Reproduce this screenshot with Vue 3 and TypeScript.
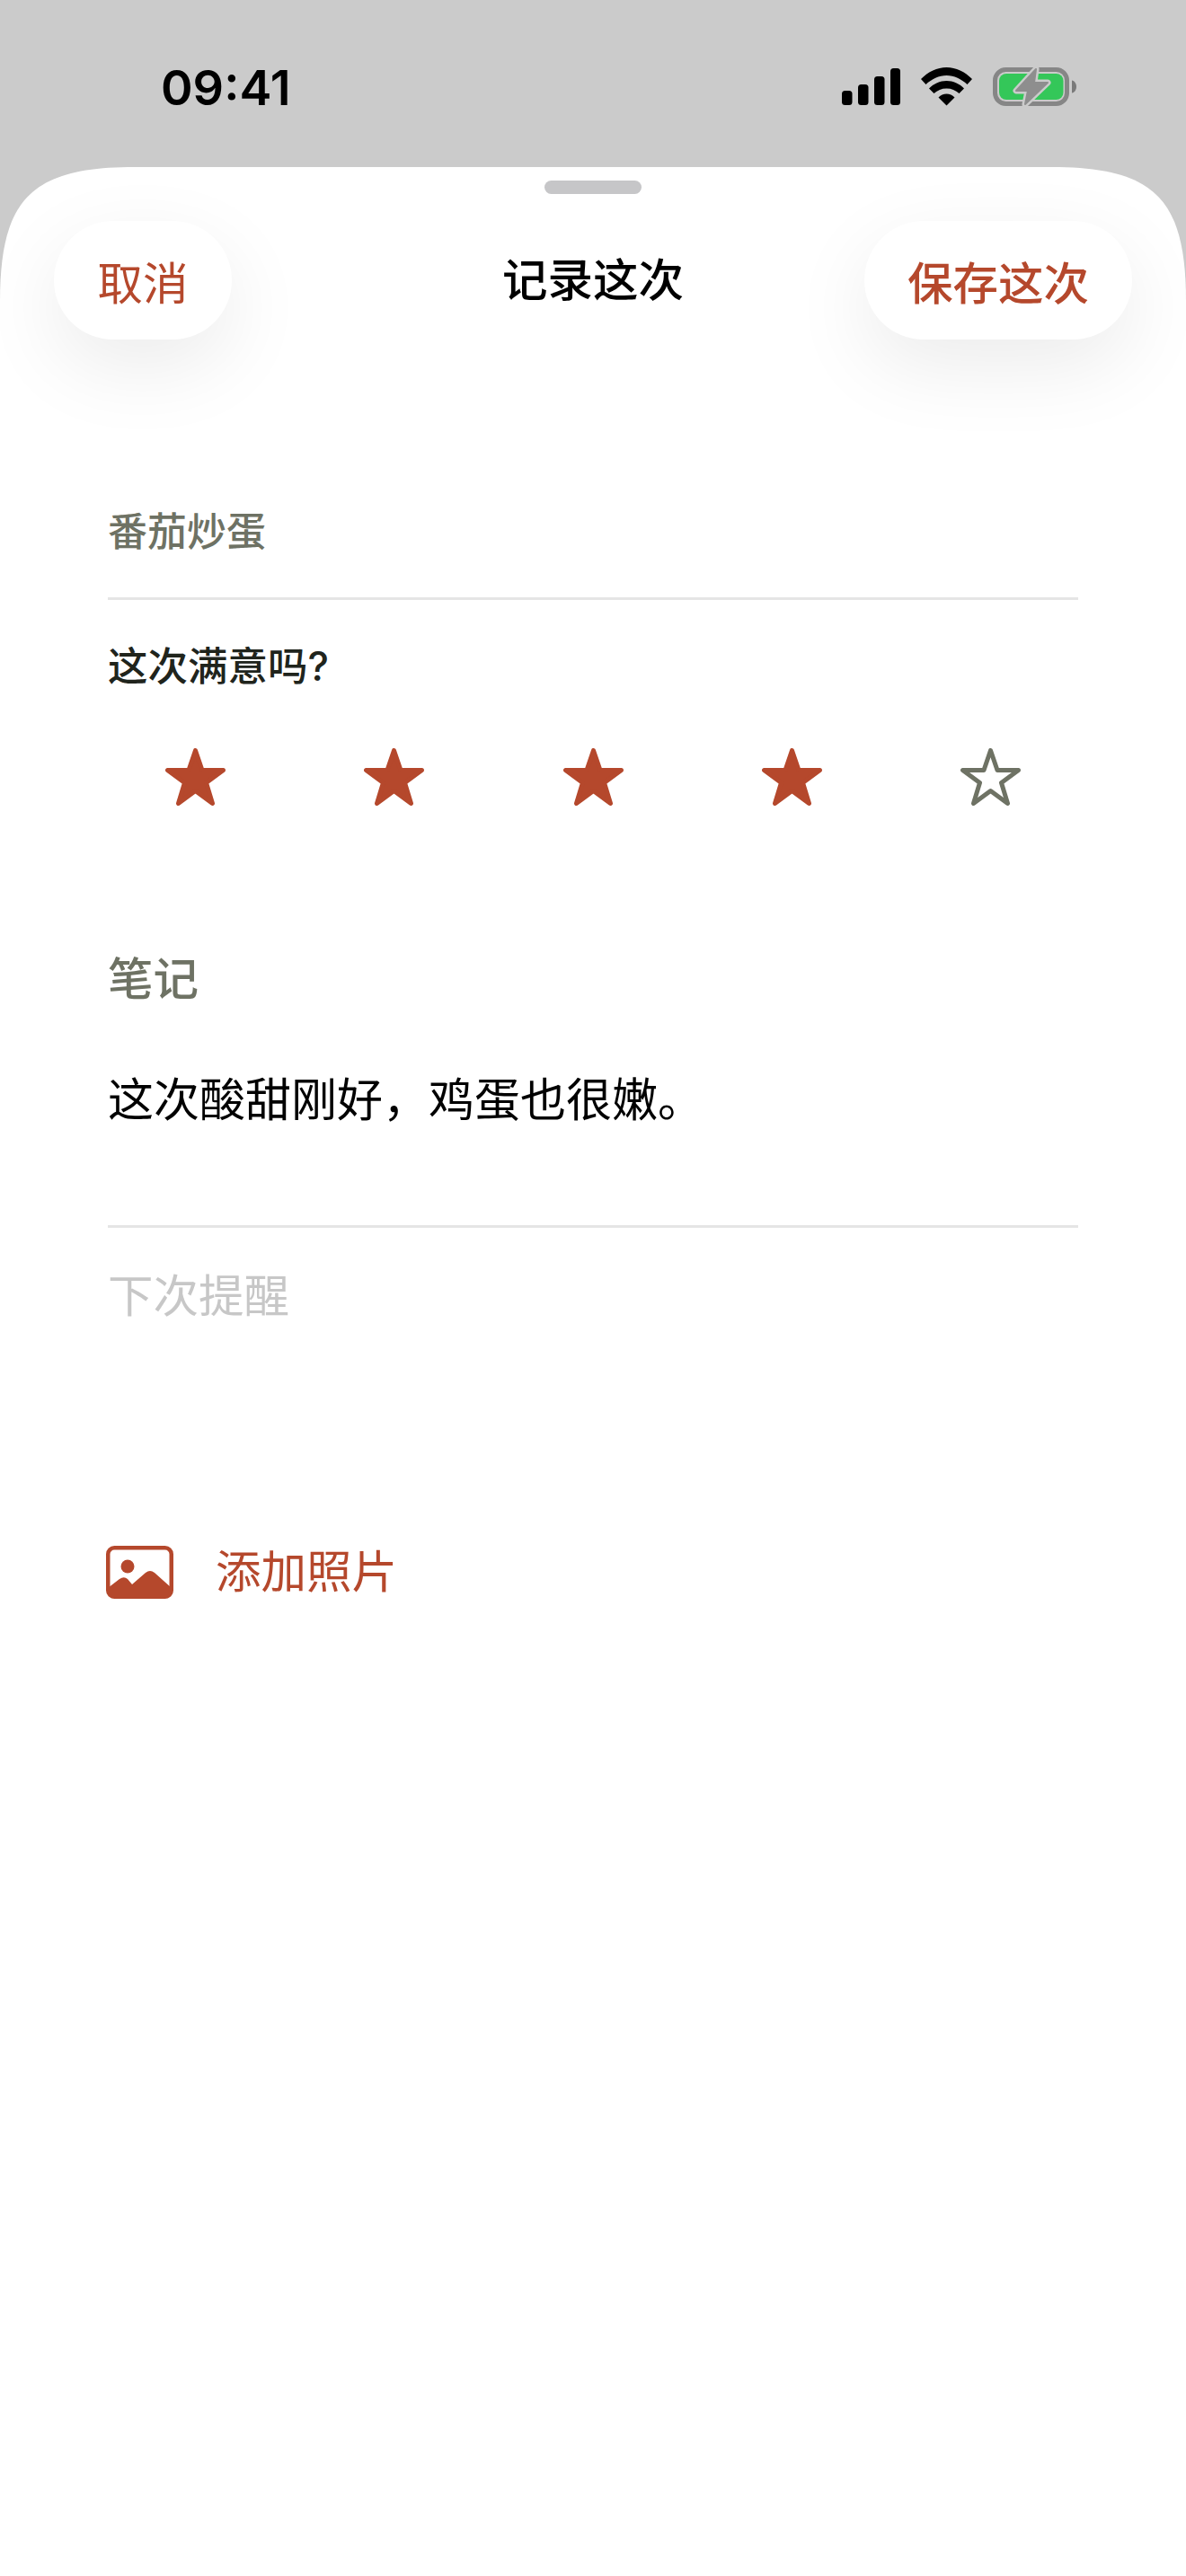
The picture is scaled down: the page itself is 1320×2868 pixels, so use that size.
<script setup lang="ts">
const stars = [true, true, true, true, false]
const starPoints = '33.5,2.5 41,24.5 64.5,24.5 45.5,38.5 52.5,61.5 33.5,47.5 14.5,61.5 21.5,38.5 2.5,24.5 26,24.5'
</script>

<template>
  <div class="screen">
    <!-- Status bar -->
    <div class="status-bar">
      <span class="time">09:41</span>
      <div class="status-icons">
        <svg class="signal" width="65" height="42" viewBox="0 0 65 42">
          <rect x="0" y="25" width="11.500" height="16" rx="3.500" />
          <rect x="18" y="18" width="11.500" height="23" rx="3.500" />
          <rect x="36" y="9" width="11.500" height="32" rx="3.500" />
          <rect x="54" y="0" width="11" height="41" rx="3.500" />
        </svg>
        <svg class="wifi" width="57" height="43" viewBox="0 0 57 43">
          <path d="M0 13C8 5 18 0 28.500 0S49 5 57 13L51.500 19C45 13 37 9 28.500 9S12 13 5.500 19Z" />
          <path d="M9 23.500C14.500 18 21 15 28.500 15S42.500 18 48 23.500L42.500 29C38.500 25.500 34 23.500 28.500 23.500S18.500 25.500 14.500 29Z" />
          <path d="M19.500 33.500C22 31 25 29.500 28.500 29.500S35 31 37.500 33.500L28.500 42.500Z" />
        </svg>
        <svg class="battery" width="93" height="44" viewBox="0 0 93 44">
          <rect x="2.500" y="2.500" width="80" height="38" rx="12" fill="none" stroke="#868686" stroke-width="5" />
          <rect x="7" y="7" width="71.500" height="29" rx="8" fill="#34c759" />
          <path d="M88 14.500c3 .5 5 3.500 5 7s-2 6.500-5 7z" fill="#7a7a7a" />
          <path d="M48 2 26 26H39L36 41 61 17H46Z" fill="#8e8e8e" stroke="#cbcbcb" stroke-width="7" stroke-linejoin="round" paint-order="stroke" />
          <path d="M48 2 26 26H39L36 41 61 17H46Z" fill="#8e8e8e" stroke="#8e8e8e" stroke-width="2" stroke-linejoin="round" />
        </svg>
      </div>
    </div>

    <!-- Sheet -->
    <div class="sheet">
      <div class="grabber"></div>

      <header class="nav">
        <button class="pill cancel">取消</button>
        <h1 class="nav-title">记录这次</h1>
        <button class="pill save">保存这次</button>
      </header>

      <main class="form">
        <div class="dish">番茄炒蛋</div>

        <p class="rating-label">这次满意吗?</p>
        <div class="stars">
          <svg v-for="(on, i) in stars" :key="i" class="star" :class="{ on }" width="67" height="64" viewBox="0 0 67 64">
            <polygon :points="starPoints" />
          </svg>
        </div>

        <div class="notes">
          <div class="notes-label">笔记</div>
          <div class="notes-text">这次酸甜刚好&#xFF0C;鸡蛋也很嫩。</div>
        </div>

        <div class="reminder">下次提醒</div>

        <div class="photo">
          <svg class="photo-icon" width="75" height="59" viewBox="0 0 75 59">
            <rect x="2.250" y="2.250" width="70.500" height="54.500" rx="7" fill="none" stroke="#b5482c" stroke-width="4.500" />
            <circle cx="24" cy="23" r="7.500" fill="#b5482c" />
            <path d="M2 47 15 37Q20 33.500 24 37L29 43 44 30Q49 26 54 30L73 47V52Q73 57 68 57H7Q2 57 2 52Z" fill="#b5482c" />
          </svg>
          <span class="photo-text">添加照片</span>
        </div>
      </main>
    </div>
  </div>
</template>

<style scoped>
.screen {
  width: 1320px;
  height: 2868px;
  background: #cbcbcb;
  display: flex;
  flex-direction: column;
  font-family: "Inter", "Noto Sans CJK SC", sans-serif;
  overflow: hidden;
}

.status-bar {
  height: 186px;
  flex-shrink: 0;
  display: flex;
  align-items: flex-start;
  justify-content: space-between;
  padding: 70px 122px 0 179px;
  box-sizing: border-box;
}
.time {
  font-size: 54px;
  line-height: 56px;
  font-weight: 600;
  color: #000;
}
.status-icons {
  display: flex;
  align-items: flex-start;
  gap: 23px;
  margin-top: 5px;
}
.signal { margin-top: 1px; }
.signal, .wifi { fill: #000; display: block; }
.battery { display: block; }

.sheet {
  flex: 1;
  background: #fff;
  position: relative;
  clip-path: path("M0 150C0 35 35 0 150 0H1170C1285 0 1320 35 1320 150V2682H0Z");
}
.grabber {
  position: absolute;
  top: 15px;
  left: 606px;
  width: 108px;
  height: 15px;
  border-radius: 8px;
  background: #c6c6c8;
}

.nav {
  display: flex;
  align-items: center;
  justify-content: space-between;
  padding: 60px 60px 0;
  position: relative;
}
.pill {
  height: 132px;
  border: none;
  border-radius: 66px;
  background: #fff;
  color: #b5482c;
  font-family: inherit;
  font-size: 50.5px;
  padding: 0 48px;
  box-shadow: 0 30px 90px rgba(0, 0, 0, 0.08);
}
.cancel { padding: 0 48.5px; }
.save { font-weight: 500; }
.nav-title {
  position: absolute;
  left: 0;
  right: 0;
  top: 60px;
  margin: 0;
  text-align: center;
  font-size: 50.5px;
  line-height: 132px;
  font-weight: 500;
  color: #000;
  pointer-events: none;
}

.form {
  padding: 0 120px;
}
.dish {
  margin-top: 184px;
  height: 103px;
  border-bottom: 3px solid #e5e5e5;
  font-size: 44px;
  font-weight: 500;
  line-height: 60px;
  color: #6e7264;
}
.rating-label {
  margin: 44px 0 0;
  font-size: 44.5px;
  line-height: 60px;
  font-weight: 500;
  color: #20241c;
}
.stars {
  display: flex;
  justify-content: space-between;
  margin-top: 61px;
  padding: 0 64px;
}
.star { display: block; }
.star polygon {
  fill: none;
  stroke: #6e7264;
  stroke-width: 5;
  stroke-linejoin: round;
}
.star.on polygon {
  fill: #b5482c;
  stroke: #b5482c;
}
.notes {
  margin-top: 163px;
  height: 304px;
  border-bottom: 3px solid #e5e5e5;
}
.notes-label {
  font-size: 50.5px;
  font-weight: 500;
  line-height: 60px;
  color: #6e7264;
}
.notes-text {
  margin-top: 72px;
  font-size: 51px;
  line-height: 66px;
  color: #000;
}
.reminder {
  margin-top: 46px;
  font-size: 50.5px;
  line-height: 60px;
  color: #c7c7c7;
}
.photo {
  display: flex;
  align-items: center;
  gap: 47px;
  margin-top: 247px;
  margin-left: -2px;
}
.photo-icon { display: block; }
.photo-text {
  font-size: 50.5px;
  line-height: 60px;
  color: #b5482c;
}
</style>

<style>
body { background: #fff; }
</style>
